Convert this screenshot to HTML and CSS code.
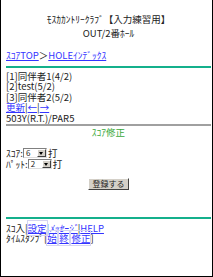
FILE: index.html
```html
<!DOCTYPE html>
<html lang="ja">
<head>
    <meta charset="UTF-8">
    <title>ｽｺｱ修正</title>
    <link rel="stylesheet" href="styles.css">
</head>
<body>
    <div class="page">
        <div class="head">
            ﾓｽｶｶﾝﾄﾘｰｸﾗﾌﾞ【入力練習用】<br>
            OUT/2番ﾎｰﾙ
        </div>

        <div class="nav">
            <a href="#">ｽｺｱTOP</a>＞<a href="#">HOLEｲﾝﾃﾞｯｸｽ</a>
        </div>

        <hr class="line teal">

        <div class="rows">
            [1]同伴者1(4/2)<br>
            [2]test(5/2)<br>
            [3]同伴者2(5/2)<br>
            <a href="#">更新</a>|<a href="#">←</a>|<a href="#">→</a><br>
            503Y(R.T.)/PAR5
        </div>

        <hr class="line gray">

        <div class="title">ｽｺｱ修正</div>

        <div class="form">
            <div class="field">ｽｺｱ:<span class="sel"><span class="val">6</span><span class="arr"></span></span>打</div>
            <div class="field">ﾊﾟｯﾄ:<span class="sel"><span class="val">2</span><span class="arr"></span></span>打</div>
        </div>

        <div class="submit">
            <button class="btn">登録する</button>
        </div>

        <hr class="line teal">

        <div class="foot">
            ｽｺ入|<a class="box" href="#">設定</a>|<a href="#" class="italic">ﾒｯｾｰｼﾞ</a>|<a href="#">HELP</a><br>
            ﾀｲﾑｽﾀﾝﾌﾟ[<a class="box" href="#">始</a>|<a class="box" href="#">終</a>|<a class="box" href="#">修正</a>]
        </div>
    </div>
</body>
</html>
```

FILE: styles.css
```css
html, body {
    margin: 0;
    padding: 0;
    background-color: white;
}

.page {
    box-sizing: border-box;
    width: 213px;
    height: 277px;
    border: 1px solid #000;
    border-top: none;
    padding: 0 1px 0 5px;
    font-family: "Noto Sans CJK JP", "DejaVu Sans", sans-serif;
    font-size: 9.5px;
    line-height: 10.5px;
    color: #222;
}

a {
    color: #3434ff;
    text-decoration: underline;
}

.head {
    text-align: center;
    line-height: 14px;
    padding-top: 12px;
}

.nav {
    margin-top: 10px;
}

.line {
    border: none;
    height: 2px;
    margin: 0;
}

.teal {
    background-color: #14b08c;
}

.gray {
    background-color: #a0a0a0;
}

.nav + .line {
    margin-top: 5px;
}

.rows {
    margin-top: 3px;
}

.rows + .line {
    margin-top: 1px;
}

.title {
    text-align: center;
    color: #3aa83a;
    margin-top: 1px;
}

.form {
    margin-top: 10px;
}

.field {
    display: flex;
    align-items: center;
    height: 11px;
}

.sel {
    display: inline-flex;
    align-items: center;
    box-sizing: border-box;
    width: 24px;
    height: 10px;
    border: 1px solid #808080;
    border-right-color: #ddd;
    border-bottom-color: #ddd;
    background-color: white;
    margin-right: 1px;
}

.val {
    flex: 1;
    font-size: 8px;
    padding-left: 2px;
}

.arr {
    box-sizing: border-box;
    width: 9px;
    height: 8px;
    background-color: #d4d0c8;
    border: 1px solid #fff;
    border-right-color: #404040;
    border-bottom-color: #404040;
    position: relative;
}

.arr::after {
    content: "";
    position: absolute;
    left: 1px;
    top: 2px;
    border-left: 2.5px solid transparent;
    border-right: 2.5px solid transparent;
    border-top: 3px solid #000;
}

.submit {
    text-align: center;
    margin-top: 8px;
}

.btn {
    box-sizing: border-box;
    width: 41px;
    height: 12px;
    padding: 0;
    font-family: inherit;
    font-size: 8px;
    line-height: 8px;
    color: #222;
    background-color: #d4d0c8;
    border: 1px solid #fff;
    border-right-color: #404040;
    border-bottom-color: #404040;
}

.submit + .line {
    margin-top: 27px;
}

.foot {
    margin-top: 4px;
}

.box {
    outline: 1px solid #d4d4f0;
}

.italic {
    font-style: italic;
}
```
